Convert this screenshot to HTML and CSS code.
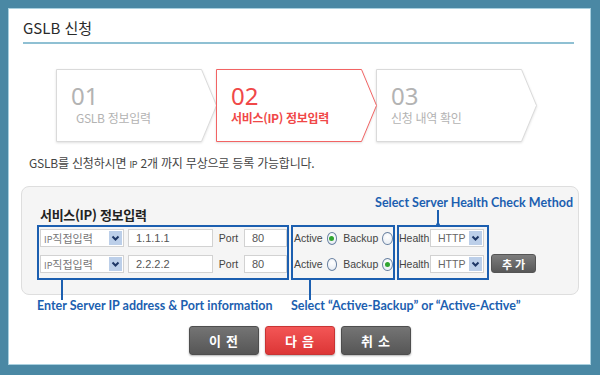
FILE: index.html
```html
<!DOCTYPE html>
<html lang="ko">
<head>
    <meta charset="UTF-8">
    <meta name="viewport" content="width=device-width, initial-scale=1.0">
    <title>GSLB 신청</title>
    <link rel="stylesheet" href="styles.css">
</head>
<body>
    <div class="panel">
        <div class="header">
            <h2>GSLB 신청</h2>
        </div>

        <div class="steps">
            <div class="step">
                <svg class="step-bg" width="162" height="75" viewBox="0 0 162 75"><polygon points="0.5,0.5 145.5,0.5 160.5,36.5 145.5,72.5 0.5,72.5" fill="#fff" stroke="#dadada"/></svg>
                <div class="step-text">
                    <div class="step-num">01</div>
                    <div class="step-name first">GSLB 정보입력</div>
                </div>
            </div>
            <div class="step active">
                <svg class="step-bg" width="162" height="75" viewBox="0 0 162 75"><polygon points="0.5,0.5 145.5,0.5 160.5,36.5 145.5,72.5 0.5,72.5" fill="#fff" stroke="#f26464"/></svg>
                <div class="step-text">
                    <div class="step-num">02</div>
                    <div class="step-name">서비스(IP) 정보입력</div>
                </div>
            </div>
            <div class="step">
                <svg class="step-bg" width="162" height="75" viewBox="0 0 162 75"><polygon points="0.5,0.5 145.5,0.5 160.5,36.5 145.5,72.5 0.5,72.5" fill="#fff" stroke="#dadada"/></svg>
                <div class="step-text">
                    <div class="step-num">03</div>
                    <div class="step-name">신청 내역 확인</div>
                </div>
            </div>
        </div>

        <p class="notice">GSLB를 신청하시면 <span class="small">IP</span> 2개 까지 무상으로 등록 가능합니다.</p>

        <div class="form-box">
            <div class="form-top">
                <div class="form-title">서비스(IP) 정보입력</div>
                <div class="note">Select Server Health Check Method</div>
            </div>
            <div class="groups">
                <div class="group g-ip">
                    <span class="pin-down"></span>
                    <div class="row">
                        <div class="sel ip-sel"><span><span class="small">IP</span>직접입력</span><span class="sel-btn"><svg width="13" height="14" viewBox="0 0 13 14"><path d="M3.5 5.5 L6.5 8.5 L9.5 5.5" fill="none" stroke="#1e3766" stroke-width="2"/></svg></span></div>
                        <div class="inp ip-inp">1.1.1.1</div>
                        <span class="lbl port-lbl">Port</span>
                        <div class="inp port-inp">80</div>
                    </div>
                    <div class="row">
                        <div class="sel ip-sel"><span><span class="small">IP</span>직접입력</span><span class="sel-btn"><svg width="13" height="14" viewBox="0 0 13 14"><path d="M3.5 5.5 L6.5 8.5 L9.5 5.5" fill="none" stroke="#1e3766" stroke-width="2"/></svg></span></div>
                        <div class="inp ip-inp">2.2.2.2</div>
                        <span class="lbl port-lbl">Port</span>
                        <div class="inp port-inp">80</div>
                    </div>
                </div>
                <div class="group g-mode">
                    <span class="pin-down"></span>
                    <div class="row">
                        <span class="lbl">Active</span><span class="radio checked"></span>
                        <span class="lbl backup">Backup</span><span class="radio"></span>
                    </div>
                    <div class="row">
                        <span class="lbl">Active</span><span class="radio"></span>
                        <span class="lbl backup">Backup</span><span class="radio checked"></span>
                    </div>
                </div>
                <div class="group g-health">
                    <span class="pin-up"></span>
                    <div class="row">
                        <span class="lbl">Health</span>
                        <div class="sel health-sel"><span>HTTP</span><span class="sel-btn"><svg width="13" height="14" viewBox="0 0 13 14"><path d="M3.5 5.5 L6.5 8.5 L9.5 5.5" fill="none" stroke="#1e3766" stroke-width="2"/></svg></span></div>
                    </div>
                    <div class="row">
                        <span class="lbl">Health</span>
                        <div class="sel health-sel"><span>HTTP</span><span class="sel-btn"><svg width="13" height="14" viewBox="0 0 13 14"><path d="M3.5 5.5 L6.5 8.5 L9.5 5.5" fill="none" stroke="#1e3766" stroke-width="2"/></svg></span></div>
                    </div>
                </div>
                <button type="button" class="add-btn">추가</button>
            </div>
        </div>

        <div class="notes">
            <div class="note note-ip">Enter Server IP address &amp; Port information</div>
            <div class="note">Select “Active-Backup” or “Active-Active”</div>
        </div>

        <div class="buttons">
            <button type="button" class="btn">이전</button>
            <button type="button" class="btn btn-red">다음</button>
            <button type="button" class="btn">취소</button>
        </div>
    </div>
</body>
</html>
```

FILE: styles.css
```css
body {
    margin: 0;
    background-color: #4a88a4;
    font-family: "Noto Sans CJK KR", "Noto Sans", sans-serif;
    color: #333;
}
.panel {
    box-sizing: border-box;
    width: 583px;
    height: 357px;
    margin: 8px 9px 10px 8px;
    background-color: #fff;
    border: 1px solid #a9d0df;
}
.header {
    margin: 0 16px 0 14px;
    padding: 9px 0 4px;
    border-bottom: 2px solid #8fc0d3;
}
h2 {
    margin: 0;
    font-size: 15px;
    line-height: 20px;
    font-weight: 400;
    color: #2a2a2a;
}
.steps {
    display: flex;
    margin: 25px 0 0 47px;
}
.step {
    position: relative;
    width: 161px;
    height: 73px;
    margin-right: -1px;
}
.step.active {
    z-index: 1;
}
.step-bg {
    position: absolute;
    left: 0;
    top: 0;
    filter: drop-shadow(0 1px 1px rgba(0,0,0,0.12));
}
.step-text {
    position: relative;
    padding: 13px 0 0 15px;
    color: #b3b3b3;
}
.step-num {
    font-family: "Noto Sans", sans-serif;
    font-size: 24px;
    line-height: 28px;
}
.step-name {
    font-size: 12px;
    line-height: 16px;
    letter-spacing: -0.3px;
}
.step-name.first {
    padding-left: 5px;
}
.step.active .step-text {
    color: #f04848;
}
.step.active .step-name {
    font-weight: 700;
}
.notice {
    margin: 13px 0 0 20px;
    font-size: 12px;
    line-height: 16px;
    color: #444;
    letter-spacing: -0.2px;
}
.small {
    font-size: 9px;
}
.form-box {
    margin: 13px 11px 0 12px;
    padding: 9px 5px 14px 15px;
    background-color: #f5f5f5;
    border: 1px solid #dedede;
    border-radius: 8px;
}
.form-top {
    display: flex;
    justify-content: space-between;
    align-items: flex-start;
}
.form-title {
    margin: 11px 0 0 3px;
    font-size: 13px;
    line-height: 16px;
    font-weight: 700;
    color: #222;
    letter-spacing: -0.3px;
}
.note {
    font-family: Lato, "Liberation Sans", sans-serif;
    font-weight: 700;
    font-size: 12.5px;
    line-height: 14px;
    color: #1c5fb0;
}
.groups {
    display: flex;
    gap: 2px;
    margin-top: 2px;
}
.group {
    position: relative;
    box-sizing: border-box;
    display: flex;
    flex-direction: column;
    gap: 8px;
    padding: 2px 0 5px;
    border: 2px solid #1c5fb0;
}
.g-ip {
    width: 252px;
    padding-left: 1px;
}
.g-mode {
    width: 104px;
}
.g-health {
    width: 92px;
    padding-right: 3px;
}
.pin-down,
.pin-up {
    position: absolute;
    width: 2px;
    background-color: #1c5fb0;
}
.pin-down {
    top: calc(100% + 2px);
    height: 20px;
}
.g-ip .pin-down {
    left: 22px;
}
.g-mode .pin-down {
    left: 16px;
}
.pin-up {
    top: -17px;
    height: 15px;
    left: 38px;
}
.pin-up::after {
    content: "";
    position: absolute;
    left: -1px;
    bottom: -2px;
    width: 4px;
    height: 4px;
    border-radius: 50%;
    background-color: #1c5fb0;
}
.row {
    display: flex;
    align-items: center;
    height: 18px;
}
.lbl {
    font-family: "Liberation Sans", sans-serif;
    font-size: 10.5px;
    color: #444;
}
.sel {
    box-sizing: border-box;
    display: flex;
    align-items: center;
    justify-content: space-between;
    flex-shrink: 0;
    height: 18px;
    padding-left: 3px;
    background-color: #fff;
    border: 1px solid #d2d2d2;
    font-size: 11px;
    color: #777;
}
.sel-btn {
    display: flex;
    width: 13px;
    height: 14px;
    margin-right: 1px;
    background-color: #bccfe9;
}
.ip-sel {
    width: 84px;
}
.health-sel {
    width: 54px;
    margin-left: auto;
    padding-left: 7px;
    font-family: "Liberation Sans", sans-serif;
    font-size: 10.5px;
    color: #666;
}
.inp {
    box-sizing: border-box;
    height: 18px;
    padding-left: 7px;
    background-color: #fff;
    border: 1px solid #d2d2d2;
    font-family: "Liberation Sans", sans-serif;
    font-size: 11px;
    line-height: 16px;
    color: #555;
}
.ip-inp {
    width: 85px;
    margin-left: 4px;
}
.port-lbl {
    flex: 1;
    text-align: center;
}
.port-inp {
    width: 43px;
}
.g-mode .row {
    padding-left: 1px;
}
.radio {
    box-sizing: border-box;
    display: flex;
    align-items: center;
    justify-content: center;
    width: 13px;
    height: 13px;
    margin-left: 4px;
    border: 1px solid #6a82a2;
    border-radius: 50%;
    background: radial-gradient(circle at 50% 35%, #fff, #e3e9f1);
}
.radio.checked::after {
    content: "";
    width: 5px;
    height: 5px;
    border-radius: 50%;
    background-color: #30a530;
}
.backup {
    margin-left: 6px;
}
.add-btn {
    align-self: flex-end;
    width: 45px;
    height: 19px;
    margin-bottom: 7px;
    padding: 0;
    border: 1px solid #555;
    border-radius: 3px;
    background: linear-gradient(#7d7d7d, #585858);
    color: #fff;
    font-family: "Noto Sans CJK KR", sans-serif;
    font-size: 11px;
    font-weight: 700;
    letter-spacing: 3px;
    text-indent: 3px;
}
.notes {
    display: flex;
    margin: 4px 0 0 28px;
}
.note-ip {
    width: 254px;
}
.buttons {
    display: flex;
    justify-content: center;
    gap: 6px;
    margin-top: 13px;
}
.btn {
    width: 70px;
    height: 29px;
    padding: 0;
    border: 1px solid #4e4e4e;
    border-radius: 3px;
    background: linear-gradient(#747474, #565656);
    box-shadow: 0 1px 2px rgba(0,0,0,0.3);
    color: #fff;
    font-family: "Noto Sans CJK KR", sans-serif;
    font-size: 13px;
    font-weight: 700;
    letter-spacing: 5px;
    text-indent: 5px;
}
.btn-red {
    border-color: #c83434;
    background: linear-gradient(#f35656, #dc3636);
}
```
